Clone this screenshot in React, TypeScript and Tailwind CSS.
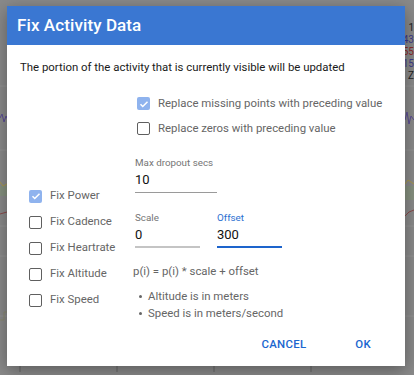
import React from 'react';

const font = { fontFamily: 'Roboto, "Liberation Sans", sans-serif' };

function Box({ checked }: { checked?: boolean }) {
  if (checked) {
    return (
      <span className="flex h-[13px] w-[13px] shrink-0 items-center justify-center rounded-[2px] bg-[#8fb3ee]">
        <svg viewBox="0 0 24 24" className="h-[12px] w-[12px]" fill="none" stroke="white" strokeWidth="3">
          <path d="M5 12.5l4.5 4.5L19 7.5" />
        </svg>
      </span>
    );
  }
  return <span className="h-[13px] w-[13px] shrink-0 rounded-[2px] border-[1.5px] border-[#5f5f5f]" />;
}

function CheckRow({ label, checked }: { label: string; checked?: boolean }) {
  return (
    <div className="flex h-[26px] items-center gap-[8px]">
      <Box checked={checked} />
      <span className="text-[11.4px] text-[#666]">{label}</span>
    </div>
  );
}

function Field({ label, value, width, active, thick }: { label: string; value: string; width: string; active?: boolean; thick?: boolean }) {
  return (
    <div className={width}>
      <div className={`h-[14px] text-[9.8px] leading-[14px] ${active ? 'text-[#2b6fd1]' : 'text-[#757575]'}`}>{label}</div>
      <div
        className={`mt-[1px] h-[22px] pb-[4px] text-[13px] leading-[18px] text-[#111] ${
          active ? 'border-b-2 border-[#1d64cc]' : thick ? 'border-b-2 border-[#c4c4c4]' : 'border-b border-[#9a9a9a]'
        }`}
      >
        {value}
      </div>
    </div>
  );
}

function Background() {
  return (
    <div className="absolute inset-0 bg-[#8a8a8a]">
      <svg className="absolute inset-0" width="414" height="375">
        <line x1="0" y1="86" x2="414" y2="86" stroke="#939393" />
        <line x1="0" y1="150" x2="414" y2="150" stroke="#939393" />
        <line x1="0" y1="226" x2="414" y2="226" stroke="#939393" />
        <line x1="0" y1="256" x2="414" y2="256" stroke="#939393" />
        <line x1="0" y1="316" x2="414" y2="316" stroke="#939393" />
        <polyline points="0,118 2,114 4,122 6,116 8,120" fill="none" stroke="#5b4c94" strokeWidth="1" />
        <polyline points="405,120 407,112 409,124 411,116 414,120" fill="none" stroke="#5b4c94" strokeWidth="1" />
        <rect x="0" y="186" width="8" height="10" fill="#86917f" />
        <rect x="405" y="186" width="9" height="14" fill="#86917f" />
        <polyline points="0,182 3,186 7,184" fill="none" stroke="#a89a4a" />
        <polyline points="405,184 408,180 414,184" fill="none" stroke="#a89a4a" />
        <polyline points="0,214 7,212" fill="none" stroke="#8a4a4a" />
        <polyline points="405,216 409,212 414,210" fill="none" stroke="#8a4a4a" />
        <polyline points="0,320 4,320 4,312 7,312" fill="none" stroke="#8a8a70" />
        <line x1="20" y1="366" x2="20" y2="372" stroke="#666" />
        <line x1="117" y1="366" x2="117" y2="372" stroke="#666" />
        <line x1="214" y1="366" x2="214" y2="372" stroke="#666" />
        <line x1="311" y1="366" x2="311" y2="372" stroke="#666" />
      </svg>
      <div className="absolute right-0 top-[22px] flex flex-col items-end text-[10px] leading-[12px]" style={font}>
        <span className="text-[#222]">1</span>
        <span className="text-[#3d3a8a]">43</span>
        <span className="text-[#8a2a2a]">55</span>
        <span className="text-[#3d3a8a]">15</span>
        <span className="text-[#222]">Z</span>
      </div>
    </div>
  );
}

export default function App() {
  return (
    <div className="relative h-[375px] w-[414px] overflow-hidden" style={font}>
      <Background />
      <div className="relative pl-[7px] pt-[6px]">
        <div className="flex h-[360px] w-[398px] flex-col bg-white shadow-[0_4px_16px_rgba(0,0,0,0.35)]">
          <div className="flex h-[39px] items-center bg-[#3a77d2] px-[10px]">
            <h2 className="text-[17px] font-medium tracking-[0.1px] text-white">Fix Activity Data</h2>
          </div>

          <p className="pl-[13px] pt-[15px] text-[11.4px] leading-[14px] text-[#1a1a1a]">
            The portion of the activity that is currently visible will be updated
          </p>

          <div className="mt-[17px] flex">
            <div className="w-[128px] shrink-0 pl-[22px] pt-[92px]">
              <CheckRow label="Fix Power" checked />
              <CheckRow label="Fix Cadence" />
              <CheckRow label="Fix Heartrate" />
              <CheckRow label="Fix Altitude" />
              <CheckRow label="Fix Speed" />
            </div>

            <div className="flex flex-col">
              <div className="flex h-[25px] items-center gap-[8px] pl-[2px]">
                <Box checked />
                <span className="text-[11.4px] text-[#666]">Replace missing points with preceding value</span>
              </div>
              <div className="flex h-[25px] items-center gap-[8px] pl-[2px]">
                <Box />
                <span className="text-[11.4px] text-[#666]">Replace zeros with preceding value</span>
              </div>

              <div className="mt-[15px]">
                <Field label="Max dropout secs" value="10" width="w-[82px]" />
              </div>

              <div className="mt-[18px] flex gap-[17px]">
                <Field label="Scale" value="0" width="w-[65px]" thick />
                <Field label="Offset" value="300" width="w-[65px]" active />
              </div>

              <div className="-ml-[2px] mt-[15px] h-[16px] text-[11.4px] leading-[16px] text-[#666]">
                p(i) = p(i) * scale + offset
              </div>

              <ul className="mt-[9px] text-[11.4px] leading-[17px] text-[#666]">
                <li className="flex items-center gap-[6px] pl-[4px]">
                  <span className="h-[3px] w-[3px] rounded-full bg-[#666]" />
                  Altitude is in meters
                </li>
                <li className="flex items-center gap-[6px] pl-[4px]">
                  <span className="h-[3px] w-[3px] rounded-full bg-[#666]" />
                  Speed is in meters/second
                </li>
              </ul>
            </div>
          </div>

          <div className="mt-auto flex justify-end gap-[21px] pb-[7px] pr-[20px]">
            <button className="h-[28px] px-[14px] text-[11.4px] font-medium uppercase tracking-[0.3px] text-[#1b66cf]">
              Cancel
            </button>
            <button className="h-[28px] px-[14px] text-[11.4px] font-medium uppercase tracking-[0.3px] text-[#1b66cf]">
              OK
            </button>
          </div>
        </div>
      </div>
    </div>
  );
}
